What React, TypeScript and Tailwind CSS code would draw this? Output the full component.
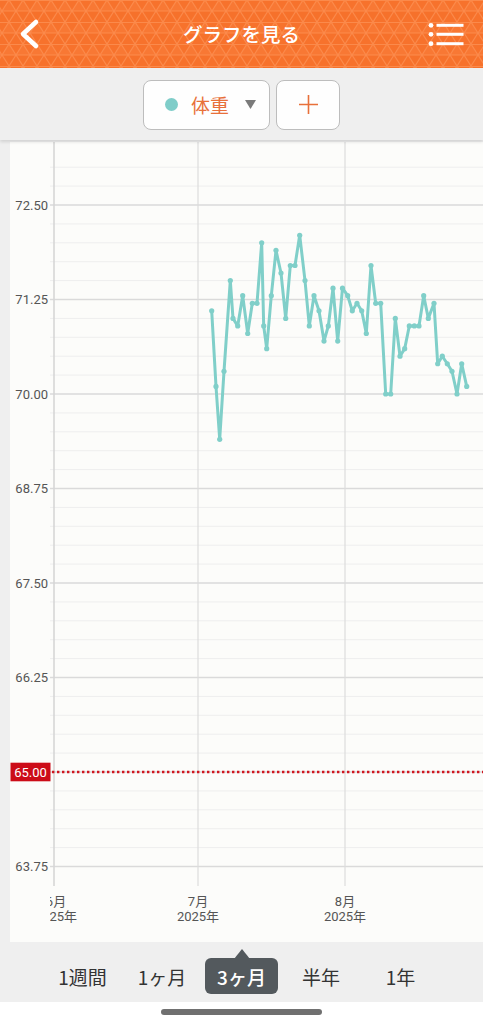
import React from "react";

const data: [number, number][] = [
  [211.7, 71.1], [216, 70.1], [219.7, 69.4], [224, 70.3], [230.3, 71.5], [233, 71.0],
  [237.7, 70.9], [242.7, 71.3], [247.7, 70.8], [252.3, 71.2], [257, 71.2], [261.7, 72.0],
  [263.7, 70.9], [266.7, 70.6], [271.3, 71.3], [276, 71.9], [281, 71.6], [285.7, 71.0],
  [290.3, 71.7], [295, 71.7], [299.7, 72.1], [305, 71.5], [309.3, 70.9], [314, 71.3],
  [319, 71.1], [324, 70.7], [328.3, 70.9], [333, 71.4], [337.7, 70.7], [342.5, 71.4],
  [347.7, 71.3], [352.3, 71.1], [357, 71.2], [361.7, 71.1], [366.3, 70.8], [371, 71.7],
  [375.7, 71.2], [380.7, 71.2], [385.7, 70.0], [390.7, 70.0], [395.3, 71.0], [400, 70.5],
  [404.7, 70.6], [409.3, 70.9], [414.3, 70.9], [419, 70.9], [423.7, 71.3], [428.3, 71.0],
  [434, 71.2], [437.7, 70.4], [442.3, 70.5], [447.3, 70.4], [452, 70.3], [457, 70.0],
  [461.7, 70.4], [466.7, 70.1],
];

const yOf = (v: number) => 394 - (v - 70) * 75.6;

const FONT_NUM = "Roboto, 'Noto Sans CJK JP', sans-serif";

function Chart() {
  const grid: { y: number; v: number; major: boolean }[] = [];
  for (let i = 0; i <= 37; i++) {
    const v = 73 - i * 0.25;
    grid.push({ y: yOf(v), v, major: i % 5 === 2 });
  }
  const poly = data.map(([x, v]) => `${x},${yOf(v).toFixed(1)}`).join(" ");
  return (
    <svg width={473} height={800} viewBox="10 142 473 800" className="block">
      <defs>
        <clipPath id="xclip">
          <rect x={50} y={886} width={440} height={60} />
        </clipPath>
      </defs>
      <rect x={10} y={142} width={473} height={800} fill="#fcfcfa" />
      {grid.map((g, i) => (
        <line
          key={i}
          x1={50}
          x2={483}
          y1={g.y}
          y2={g.y}
          stroke={g.major ? "#dadada" : "#eeeeee"}
          strokeWidth={g.major ? 1.3 : 1}
        />
      ))}
      <line x1={54} x2={54} y1={142} y2={886} stroke="#d6d6d6" strokeWidth={1.6} />
      <line x1={198} x2={198} y1={142} y2={886} stroke="#dcdcdc" strokeWidth={1.2} />
      <line x1={345} x2={345} y1={142} y2={886} stroke="#dcdcdc" strokeWidth={1.2} />
      {grid
        .filter((g) => g.major && Math.abs(g.v - 65) > 0.01)
        .map((g, i) => (
          <text
            key={i}
            x={48}
            y={g.y + 4.6}
            textAnchor="end"
            fontSize={13}
            fill="#555"
            fontFamily={FONT_NUM}
          >
            {g.v.toFixed(2)}
          </text>
        ))}
      <line
        x1={52}
        x2={483}
        y1={yOf(65)}
        y2={yOf(65)}
        stroke="#d0161f"
        strokeWidth={2.4}
        strokeDasharray="2.4 2.6"
      />
      <rect x={10.5} y={yOf(65) - 9.3} width={40} height={18.6} fill="#cc0c18" />
      <text
        x={30.5}
        y={yOf(65) + 4.6}
        textAnchor="middle"
        fontSize={13}
        fill="#fff"
        fontFamily={FONT_NUM}
      >
        65.00
      </text>
      <polyline
        points={poly}
        fill="none"
        stroke="#80cfc9"
        strokeWidth={3}
        strokeLinejoin="round"
      />
      {data.map(([x, v], i) => (
        <circle key={i} cx={x} cy={yOf(v)} r={2.6} fill="#80cfc9" />
      ))}
      <g clipPath="url(#xclip)" fontSize={13} fill="#555" fontFamily={FONT_NUM} textAnchor="middle">
        <text x={56} y={906}>6月</text>
        <text x={56} y={921}>2025年</text>
        <text x={198} y={906}>7月</text>
        <text x={198} y={921}>2025年</text>
        <text x={345} y={906}>8月</text>
        <text x={345} y={921}>2025年</text>
      </g>
    </svg>
  );
}

function Header() {
  return (
    <div className="relative h-[68px] bg-[#f7722c] flex items-center justify-between shrink-0 overflow-hidden">
      <svg className="absolute inset-0" width={483} height={68}>
        <defs>
          <pattern id="tri" x={2} y={0} width={14} height={22} patternUnits="userSpaceOnUse">
            <path d="M7 0 L14 11 L0 11 Z" fill="#f97e3b" opacity={0.55} />
            <path d="M0 11 L14 11 L7 22 Z" fill="#f6702a" opacity={0.4} />
            <path
              d="M0 0.5 H14 M0 11 H14 M0 11 L7 0 L14 11 M0 11 L7 22 L14 11"
              stroke="#fb8a4b"
              strokeWidth={1.2}
              fill="none"
            />
          </pattern>
        </defs>
        <rect width={483} height={68} fill="url(#tri)" />
      </svg>
      <div className="relative w-[60px] h-full flex items-center pl-[18px]">
        <svg width={24} height={32} viewBox="0 0 24 32">
          <path d="M18 4 L5 16 L18 28" stroke="#fff" strokeWidth={4.6} fill="none" strokeLinecap="round" strokeLinejoin="round" />
        </svg>
      </div>
      <div className="relative text-white text-[19.5px] font-medium font-['Noto_Sans_CJK_JP',sans-serif] tracking-[0px] pb-[1px]">
        グラフを見る
      </div>
      <div className="relative w-[60px] h-full flex items-center justify-end pr-[19px]">
        <svg width={36} height={26} viewBox="0 0 36 26">
          <circle cx={3} cy={4.3} r={2.4} fill="#fff" />
          <circle cx={3} cy={13.3} r={2.4} fill="#fff" />
          <circle cx={3} cy={22.7} r={2.4} fill="#fff" />
          <rect x={8.5} y={2.8} width={27} height={3} fill="#fff" />
          <rect x={8.5} y={11.8} width={27} height={3} fill="#fff" />
          <rect x={8.5} y={21.2} width={27} height={3} fill="#fff" />
        </svg>
      </div>
    </div>
  );
}

function SubBar() {
  return (
    <div className="h-[72px] bg-[#efefef] flex items-center justify-center gap-[6px] shrink-0 shadow-[0_2px_3px_rgba(0,0,0,0.12)] relative z-10 pt-[1px]">
      <div className="w-[127px] h-[50px] rounded-[8px] border border-[#bdbdbd] bg-[#fefefe] flex items-center pl-[21px]">
        <span className="w-[13px] h-[13px] rounded-full bg-[#7fcdc9]" />
        <span className="ml-[13px] text-[19px] text-[#e8703a] font-['Noto_Sans_CJK_JP',sans-serif] leading-none">
          体重
        </span>
        <svg className="ml-[16px]" width={11} height={9} viewBox="0 0 11 9">
          <path d="M0 0 H11 L5.5 9 Z" fill="#7a7a7a" />
        </svg>
      </div>
      <div className="w-[64px] h-[50px] rounded-[8px] border border-[#bdbdbd] bg-[#fefefe] flex items-center justify-center">
        <svg width={19} height={19} viewBox="0 0 19 19">
          <path d="M9.5 0 V19 M0 9.5 H19" stroke="#e8703a" strokeWidth={1.6} />
        </svg>
      </div>
    </div>
  );
}

const tabs = ["1週間", "1ヶ月", "3ヶ月", "半年", "1年"];

function Tabs() {
  return (
    <div className="h-[60px] bg-[#efefef] flex justify-center shrink-0 pt-[16px]">
      {tabs.map((t) => {
        const sel = t === "3ヶ月";
        return (
          <div key={t} className="w-[79.5px] flex justify-center">
            {sel ? (
              <div className="relative w-[73px] h-[36px] rounded-[6px] bg-[#53595d] flex items-center justify-center">
                <div className="absolute top-[-9px] left-1/2 -translate-x-1/2 w-0 h-0 border-l-[8px] border-r-[8px] border-b-[10px] border-l-transparent border-r-transparent border-b-[#53595d]" />
                <span className="text-white text-[19px] font-medium font-['Noto_Sans_CJK_JP',sans-serif] leading-none">
                  {t}
                </span>
              </div>
            ) : (
              <div className="h-[36px] flex items-center">
                <span className="text-[#333] text-[19px] font-['Noto_Sans_CJK_JP',sans-serif] leading-none">
                  {t}
                </span>
              </div>
            )}
          </div>
        );
      })}
    </div>
  );
}

export default function App() {
  return (
    <div className="w-[483px] h-[1024px] flex flex-col bg-[#efefef] overflow-hidden">
      <Header />
      <SubBar />
      <div className="flex pl-[10px] shrink-0 h-[802px] pt-[2px]">
        <Chart />
      </div>
      <Tabs />
      <div className="flex-1 bg-white flex justify-center pt-[7px]">
        <div className="w-[161px] h-[6px] rounded-full bg-[#707070]" />
      </div>
    </div>
  );
}
